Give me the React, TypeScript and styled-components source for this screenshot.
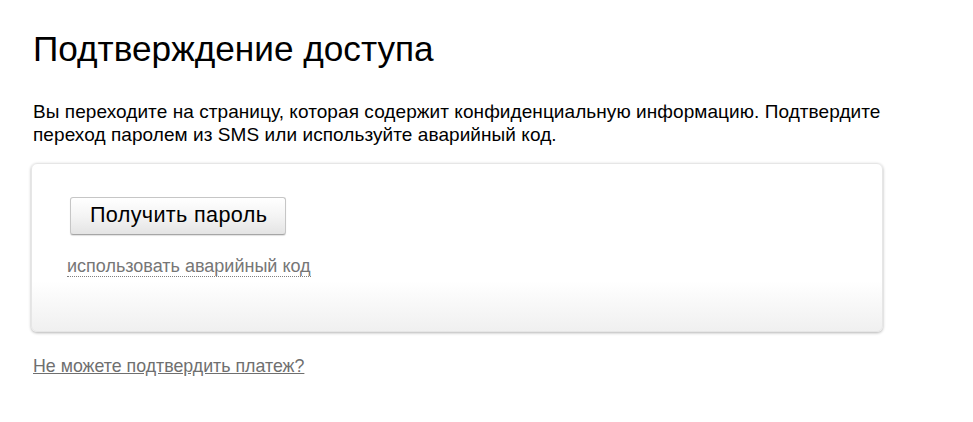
import React from "react";
import styled, { createGlobalStyle } from "styled-components";

const Global = createGlobalStyle`
  html, body { margin: 0; padding: 0; background: #fff; }
  body { font-family: "Liberation Sans", Arial, sans-serif; color: #000; }
`;

const Page = styled.div`
  padding: 29px 0 0 33px;
  width: 860px;
  display: flex;
  flex-direction: column;
  align-items: flex-start;
`;

const Title = styled.h1`
  margin: 0;
  font-size: 35.2px;
  font-weight: normal;
  line-height: 40px;
  color: #000;
`;

const Intro = styled.p`
  margin: 31px 0 0;
  font-size: 19px;
  letter-spacing: 0.07px;
  line-height: 23px;
  color: #000;
  white-space: nowrap;
`;

const Card = styled.div`
  margin: 17px 0 0 -2px;
  width: 852px;
  height: 169px;
  box-sizing: border-box;
  border: 1px solid #e6e6e6;
  border-radius: 6px;
  background: linear-gradient(to bottom, #fff 0%, #fff 70%, #f0f0f0 100%);
  box-shadow: 0 1px 3px rgba(0, 0, 0, 0.3);
  padding: 33px 0 0 38px;
  display: flex;
  flex-direction: column;
  align-items: flex-start;
`;

const Button = styled.button`
  height: 38px;
  padding: 0 18px 2px 19px;
  font-family: inherit;
  font-size: 21.6px;
  letter-spacing: 0.35px;
  line-height: 24px;
  color: #000;
  border: 1px solid #c6c6c6;
  border-bottom-color: #a6a6a6;
  border-radius: 3px;
  background: linear-gradient(to bottom, #ffffff 0%, #f4f4f4 50%, #e4e4e4 100%);
  box-shadow: 0 1px 1px rgba(0, 0, 0, 0.12);
  cursor: pointer;
`;

const DottedLink = styled.a`
  display: inline-block;
  margin: 21px 0 0 -3px;
  font-size: 18px;
  line-height: 20px;
  color: #767676;
  text-decoration: none;
  border-bottom: 1px dotted #808080;
  cursor: pointer;
`;

const FooterLink = styled.a`
  display: inline-block;
  margin-top: 24px;
  font-size: 17.8px;
  line-height: 20px;
  color: #6f6f6f;
  text-decoration: underline;
  cursor: pointer;
`;

export default function App() {
  return (
    <>
      <Global />
      <Page>
        <Title>Подтверждение доступа</Title>
        <Intro>
          Вы переходите на страницу, которая содержит конфиденциальную информацию. Подтвердите
          <br />
          переход паролем из SMS или используйте аварийный код.
        </Intro>
        <Card>
          <Button>Получить пароль</Button>
          <DottedLink>использовать аварийный код</DottedLink>
        </Card>
        <FooterLink>Не можете подтвердить платеж?</FooterLink>
      </Page>
    </>
  );
}
